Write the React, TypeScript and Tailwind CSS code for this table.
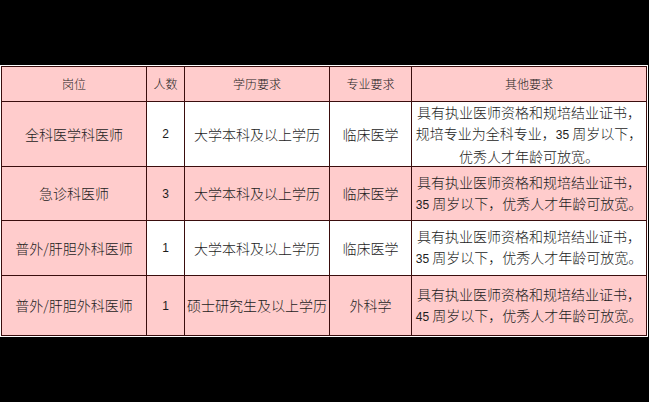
const pink = "bg-[#ffcccc]"

type Row = {
  post: string
  count: string
  edu: string
  major: string
  other: React.ReactNode
  shaded: boolean
}

const Num = ({ children }: { children: React.ReactNode }) => (
  <span className="text-[12px] font-['Liberation_Sans',sans-serif]">{children}</span>
)

const rows: Row[] = [
  {
    post: "全科医学科医师",
    count: "2",
    edu: "大学本科及以上学历",
    major: "临床医学",
    other: (
      <>
        具有执业医师资格和规培结业证书，
        <br />
        规培专业为全科专业，<Num>35</Num> 周岁以下，
        <br />
        优秀人才年龄可放宽。
      </>
    ),
    shaded: false,
  },
  {
    post: "急诊科医师",
    count: "3",
    edu: "大学本科及以上学历",
    major: "临床医学",
    other: (
      <>
        具有执业医师资格和规培结业证书，
        <br />
        <Num>35</Num> 周岁以下，优秀人才年龄可放宽。
      </>
    ),
    shaded: true,
  },
  {
    post: "普外/肝胆外科医师",
    count: "1",
    edu: "大学本科及以上学历",
    major: "临床医学",
    other: (
      <>
        具有执业医师资格和规培结业证书，
        <br />
        <Num>35</Num> 周岁以下，优秀人才年龄可放宽。
      </>
    ),
    shaded: false,
  },
  {
    post: "普外/肝胆外科医师",
    count: "1",
    edu: "硕士研究生及以上学历",
    major: "外科学",
    other: (
      <>
        具有执业医师资格和规培结业证书，
        <br />
        <Num>45</Num> 周岁以下，优秀人才年龄可放宽。
      </>
    ),
    shaded: true,
  },
]

const headers = ["岗位", "人数", "学历要求", "专业要求", "其他要求"]

export default function App() {
  return (
    <div className="w-[649px] h-[402px] bg-black pt-[65px] font-['Noto_Sans_CJK_SC',sans-serif] font-light text-[#1c1c1c]">
      <div className="w-[648px] bg-white p-px">
        <div className="grid grid-cols-[144px_37px_144px_81px_234px] grid-rows-[34px_64px_53px_54px_59px] gap-px bg-[#3a0d0d] p-px">
          {headers.map((h) => (
            <div key={h} className={`${pink} flex items-center justify-center text-[12px]`}>
              {h}
            </div>
          ))}
          {rows.map((r, i) => {
            const bg = r.shaded ? pink : "bg-white"
            return (
              <div key={i} className="contents">
                <div className={`${pink} flex items-center justify-center text-[14px]`}>{r.post}</div>
                <div className={`${bg} flex items-center justify-center text-[12px] font-['Liberation_Sans',sans-serif]`}>
                  {r.count}
                </div>
                <div className={`${bg} flex items-center justify-center text-[14px] whitespace-nowrap`}>{r.edu}</div>
                <div className={`${bg} flex items-center justify-center text-[14px]`}>{r.major}</div>
                <div className={`${bg} flex items-center justify-center text-center text-[14px] leading-[21px] whitespace-nowrap`}>
                  <p>{r.other}</p>
                </div>
              </div>
            )
          })}
        </div>
      </div>
    </div>
  )
}
